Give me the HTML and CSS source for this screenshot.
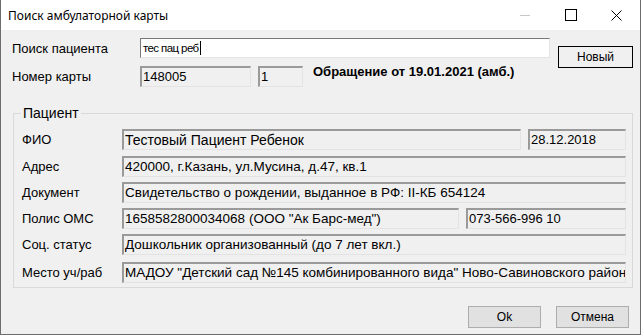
FILE: index.html
```html
<!DOCTYPE html>
<html lang="ru">

<head>
    <meta charset="UTF-8">
    <title>Поиск амбулаторной карты</title>
    <link rel="stylesheet" href="styles.css">
</head>

<body>
    <div class="window">
        <div class="titlebar">
            <span class="title">Поиск амбулаторной карты</span>
            <div class="controls">
                <span class="ctl ctl-min"></span>
                <span class="ctl ctl-max"></span>
                <span class="ctl ctl-close">
                    <svg width="11" height="11" viewBox="0 0 11 11">
                        <path d="M0.5 0.5 L10.5 10.5 M10.5 0.5 L0.5 10.5" stroke="#000" stroke-width="1" fill="none" />
                    </svg>
                </span>
            </div>
        </div>

        <div class="content">
            <div class="top">
                <div class="top-rows">
                    <div class="row search-row">
                        <label class="lbl">Поиск пациента</label>
                        <div class="input search-input">тес пац реб<span class="caret"></span></div>
                    </div>
                    <div class="row card-row">
                        <label class="lbl">Номер карты</label>
                        <div class="box card-num">148005</div>
                        <div class="box card-idx">1</div>
                        <span class="visit">Обращение от 19.01.2021 (амб.)</span>
                    </div>
                </div>
                <button class="btn btn-new">Новый</button>
            </div>

            <fieldset class="patient">
                <legend>Пациент</legend>
                <div class="prow">
                    <span class="plbl">ФИО</span>
                    <div class="box fio">Тестовый Пациент Ребенок</div>
                    <div class="box bdate">28.12.2018</div>
                </div>
                <div class="prow">
                    <span class="plbl">Адрес</span>
                    <div class="box wide">420000, г.Казань, ул.Мусина, д.47, кв.1</div>
                </div>
                <div class="prow">
                    <span class="plbl">Документ</span>
                    <div class="box wide">Свидетельство о рождении, выданное в РФ: II-КБ 654124</div>
                </div>
                <div class="prow">
                    <span class="plbl">Полис ОМС</span>
                    <div class="box polis">1658582800034068 (ООО "Ак Барс-мед")</div>
                    <div class="box snils">073-566-996 10</div>
                </div>
                <div class="prow">
                    <span class="plbl">Соц. статус</span>
                    <div class="box wide">Дошкольник организованный (до 7 лет вкл.)</div>
                </div>
                <div class="prow">
                    <span class="plbl">Место уч/раб</span>
                    <div class="box wide">МАДОУ "Детский сад №145 комбинированного вида" Ново-Савиновского района</div>
                </div>
            </fieldset>

            <div class="footer">
                <button class="btn btn-flat">Ok</button>
                <button class="btn btn-flat">Отмена</button>
            </div>
        </div>
    </div>
</body>

</html>
```

FILE: styles.css
```css
* {
    margin: 0;
    padding: 0;
    box-sizing: border-box;
}

body {
    width: 641px;
    height: 335px;
    overflow: hidden;
    background: #fff;
    font-family: "Liberation Sans", Arial, sans-serif;
    font-size: 13px;
    color: #000;
}

.window {
    width: 641px;
    height: 335px;
    border: 1px solid #6d6d6d;
    border-top: none;
    display: flex;
    flex-direction: column;
}

.titlebar {
    height: 30px;
    background: #fff;
    display: flex;
    align-items: center;
    justify-content: space-between;
    padding-left: 7px;
}

.title {
    font-family: "Noto Sans", sans-serif;
    font-size: 12px;
    color: #000;
}

.controls {
    display: flex;
    height: 100%;
}

.ctl {
    width: 46px;
    height: 100%;
    display: flex;
    align-items: center;
    justify-content: center;
}

.ctl-min::before {
    content: "";
    width: 10px;
    height: 1px;
    background: #c8c8c8;
}

.ctl-max::before {
    content: "";
    width: 10px;
    height: 10px;
    border: 1px solid #000;
}

.ctl-close {
    padding-right: 2px;
}

.content {
    flex: 1;
    background: #f0f0f0;
    display: flex;
    flex-direction: column;
}

/* верхняя часть: поиск и номер карты */
.top {
    display: flex;
    padding: 8px 0 0 11px;
}

.top-rows {
    width: 539px;
    display: flex;
    flex-direction: column;
    gap: 8px;
}

.row {
    display: flex;
    align-items: center;
}

.lbl {
    width: 128px;
    font-size: 13px;
}

.input {
    width: 410px;
    height: 20px;
    background: #fff;
    border: 1px solid #7a7a7a;
    border-color: #7a7a7a #e3e3e3 #e3e3e3 #7a7a7a;
    padding: 1px 2px;
    font-size: 11.5px;
    line-height: 16px;
    letter-spacing: -0.6px;
}

.caret {
    display: inline-block;
    width: 1px;
    height: 14px;
    background: #000;
    vertical-align: -3px;
    margin-left: 1px;
}

.box {
    height: 21px;
    background: #f0f0f0;
    border-style: solid;
    border-width: 2px 1px 1px 2px;
    border-color: #9a9a9a #e3e3e3 #e3e3e3 #9a9a9a;
    padding: 0 1px;
    font-size: 13px;
    line-height: 18px;
    white-space: nowrap;
    overflow: hidden;
}

.card-num {
    width: 111px;
}

.card-idx {
    width: 45px;
    margin-left: 7px;
}

.visit {
    margin-left: 10px;
    font-weight: bold;
    font-size: 13px;
    margin-top: -10px;
}

.btn {
    font-family: "Liberation Sans", Arial, sans-serif;
    font-size: 12px;
    color: #000;
    height: 22px;
    background: #e1e1e1;
    border: 1px solid #adadad;
}

.btn-new {
    width: 75px;
    margin: 8px 0 0 7px;
    background: #f0f0f0;
    border-color: #000;
}

/* группа «Пациент» */
.patient {
    margin: 18px 0 0 12px;
    width: 620px;
    border: 1px solid #d9d9d9;
    padding: 8px 6px 4px 8px;
    display: flex;
    flex-direction: column;
    gap: 5px;
}

.patient legend {
    margin-left: -1px;
    padding: 0 2px;
    font-size: 14px;
}

.prow {
    display: flex;
    align-items: center;
}

.prow:first-of-type {
    margin-bottom: 1px;
}

.prow:last-child {
    margin-top: 2px;
}

.prow .box {
    font-size: 13.5px;
}

.plbl {
    width: 100px;
    font-size: 13px;
}

.prow .fio {
    width: 399px;
    font-size: 14px;
}

.prow .bdate {
    width: 98px;
    margin-left: 7px;
    font-size: 13px;
}

.wide {
    width: 504px;
}

.polis {
    width: 337px;
}

.prow .snils {
    width: 160px;
    margin-left: 7px;
    font-size: 13px;
}

.footer {
    display: flex;
    justify-content: flex-end;
    gap: 15px;
    padding: 0 11px 0 0;
    margin-top: 18px;
}

.btn-flat {
    width: 73px;
}
```
